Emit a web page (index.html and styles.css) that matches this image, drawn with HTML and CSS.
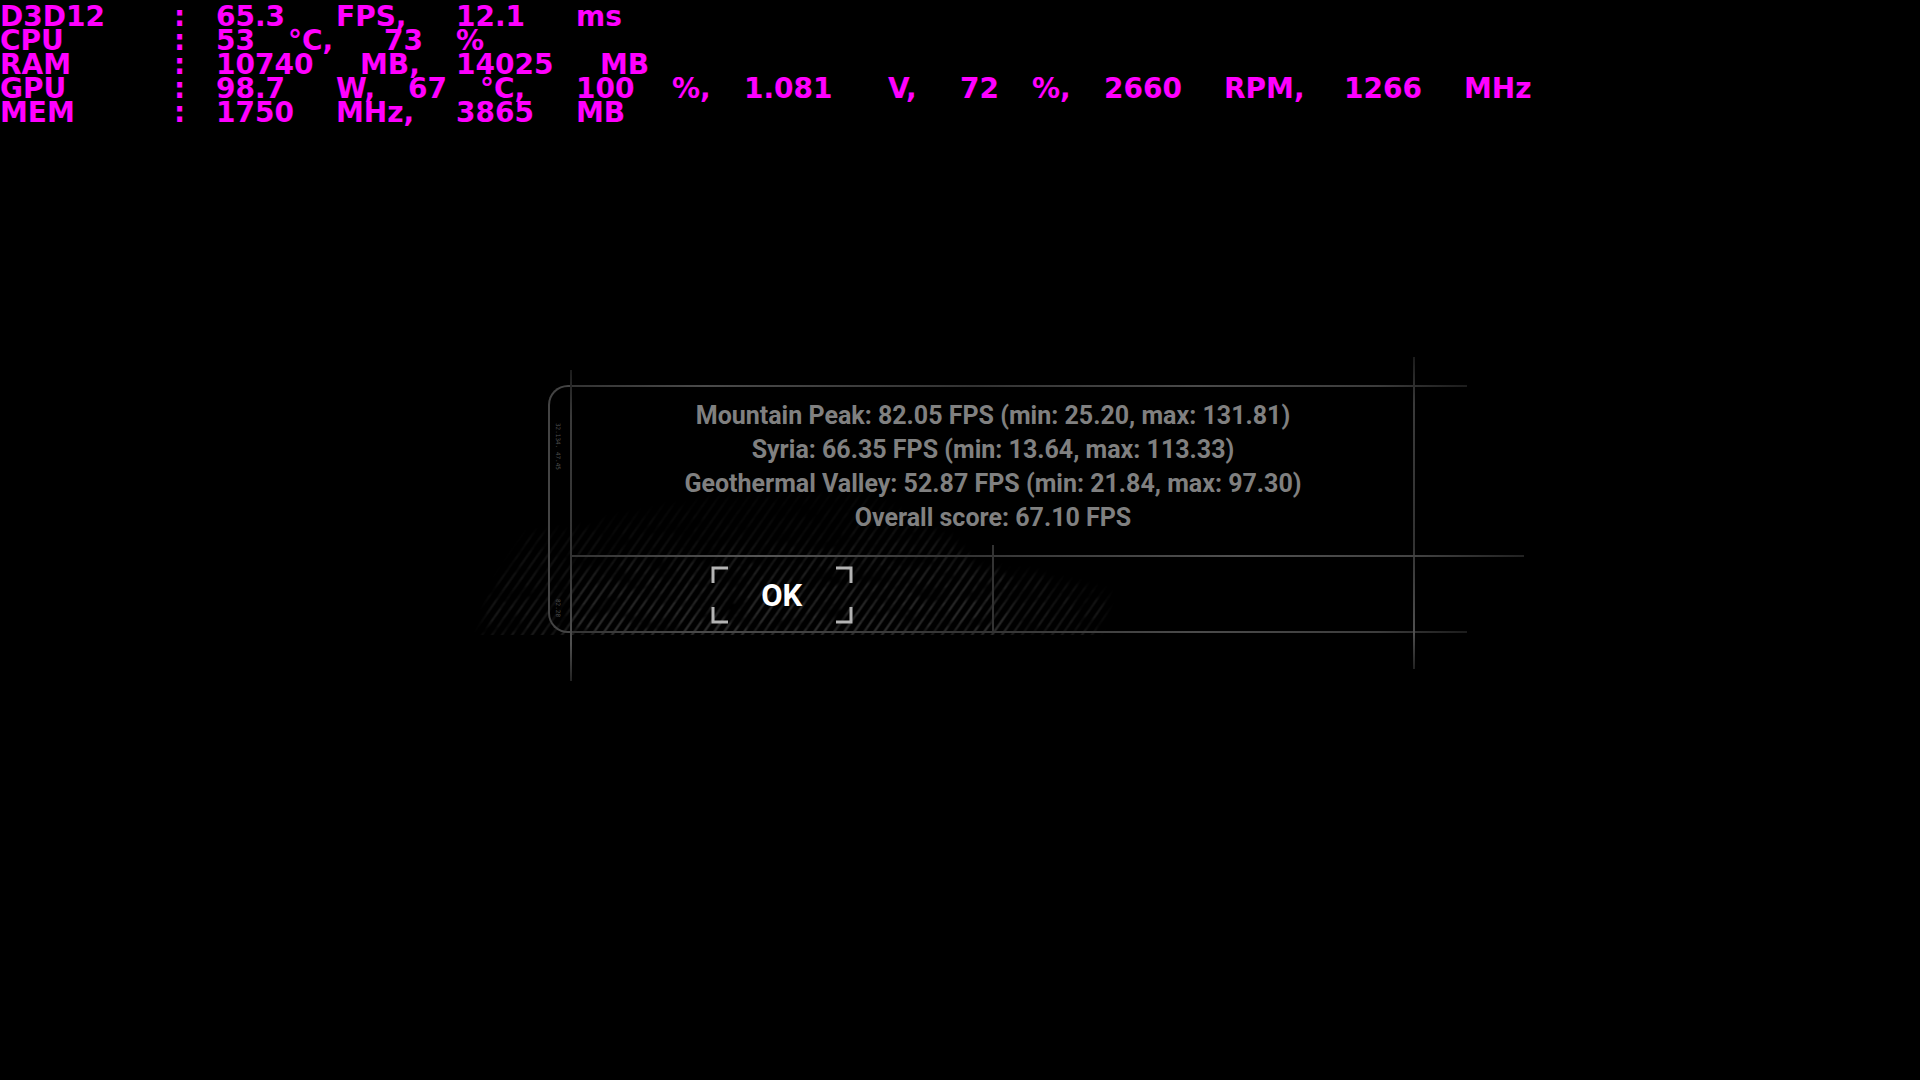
FILE: index.html
```html
<!DOCTYPE html>
<html lang="en">
<head>
<meta charset="utf-8">
<title>Benchmark results</title>
<link rel="stylesheet" href="styles.css">
</head>
<body>
<header class="hud">
  <div class="hud-row"><span class="w7">D3D12</span><span class="colon">:</span><span class="w5">65.3</span><span class="w5">FPS,</span><span class="w5">12.1</span><span>ms</span></div>
  <div class="hud-row"><span class="w7">CPU</span><span class="colon">:</span><span class="w3">53</span><span class="w4">°C,</span><span class="w3">73</span><span>%</span></div>
  <div class="hud-row"><span class="w7">RAM</span><span class="colon">:</span><span class="w6">10740</span><span class="w4">MB,</span><span class="w6">14025</span><span>MB</span></div>
  <div class="hud-row"><span class="w7">GPU</span><span class="colon">:</span><span class="w5">98.7</span><span class="w3">W,</span><span class="w3">67</span><span class="w4">°C,</span><span class="w4">100</span><span class="w3">%,</span><span class="w6">1.081</span><span class="w3">V,</span><span class="w3">72</span><span class="w3">%,</span><span class="w5">2660</span><span class="w5">RPM,</span><span class="w5">1266</span><span>MHz</span></div>
  <div class="hud-row"><span class="w7">MEM</span><span class="colon">:</span><span class="w5">1750</span><span class="w5">MHz,</span><span class="w5">3865</span><span>MB</span></div>
</header>
<main class="stage">
  <section class="dialog" role="dialog" aria-label="Benchmark results">
    <svg class="hatch" viewBox="0 0 660 156" aria-hidden="true">
      <defs>
        <pattern id="strokes" width="10" height="156" patternUnits="userSpaceOnUse" patternTransform="skewX(-35)">
          <rect x="1" width="4" height="156" fill="#fff" opacity="0.4"/>
          <rect x="2" width="2" height="156" fill="#fff" opacity="0.7"/>
        </pattern>
        <linearGradient id="fall" x1="0" y1="0" x2="0" y2="1">
          <stop offset="0" stop-color="#fff" stop-opacity="0.2"/>
          <stop offset="0.5" stop-color="#fff" stop-opacity="0.6"/>
          <stop offset="1" stop-color="#fff"/>
        </linearGradient>
        <filter id="soft" x="-10%" y="-20%" width="120%" height="140%"><feGaussianBlur stdDeviation="4"/></filter>
        <filter id="worn" x="0" y="0" width="100%" height="100%">
          <feTurbulence type="fractalNoise" baseFrequency="0.04 0.06" numOctaves="3" seed="4" result="noise"/>
          <feColorMatrix in="noise" type="matrix" values="0 0 0 0 1  0 0 0 0 1  0 0 0 0 1  2 0 0 0 -0.2" result="wear"/>
          <feComposite in="SourceGraphic" in2="wear" operator="in"/>
        </filter>
        <mask id="brush">
          <g filter="url(#soft)">
            <path d="M4 160 L16 110 L50 50 L100 42 L190 22 L260 8 L400 10 L480 56 L505 80 L560 88 L636 108 L622 160Z" fill="url(#fall)" opacity="0.4"/>
            <path d="M80 160 L90 104 L130 78 L250 62 L330 60 L400 44 L476 50 L500 84 L540 90 L530 160Z" fill="url(#fall)" opacity="0.5"/>
          </g>
        </mask>
        <clipPath id="base"><rect width="660" height="150"/></clipPath>
      </defs>
      <g clip-path="url(#base)" opacity="0.3"><g filter="url(#worn)"><rect width="660" height="156" fill="url(#strokes)" mask="url(#brush)"/></g></g>
    </svg>
    <span class="rail rail-top"></span>
    <span class="rail rail-bottom"></span>
    <span class="post post-left"></span>
    <span class="post post-right"></span>
    <div class="bracket" aria-hidden="true"><span>32.134. 47.45</span><span>82.28</span></div>
    <div class="results">
      <p>Mountain Peak: 82.05 FPS (min: 25.20, max: 131.81)</p>
      <p>Syria: 66.35 FPS (min: 13.64, max: 113.33)</p>
      <p>Geothermal Valley: 52.87 FPS (min: 21.84, max: 97.30)</p>
      <p>Overall score: 67.10 FPS</p>
    </div>
    <div class="actions">
      <div class="action">
        <button class="ok" type="button">OK
          <svg class="corners" viewBox="0 0 142 58" aria-hidden="true"><path d="M2 17V2H17M125 2H140V17M140 41V56H125M17 56H2V41"/></svg>
        </button>
      </div>
      <div class="action"></div>
    </div>
  </section>
</main>
</body>
</html>
```
FILE: styles.css
```css
* { box-sizing: border-box; }
body {
  margin: 0;
  min-height: 100vh;
  background: #000;
  color: #808080;
  font-family: Roboto, "Liberation Sans", sans-serif;
  overflow-x: hidden;
}

/* hardware monitor: words sit on a 24px character grid */
.hud {
  padding: 5px 0 1px;
  color: #f0f;
  font: bold 28px/24px "DejaVu Sans", sans-serif;
}
.hud-row { display: flex; height: 24px; white-space: nowrap; }
.hud-row span { flex: none; }
.hud-row .colon { width: 48px; padding-left: 6px; }
.w3 { width: 72px; }
.w4 { width: 96px; }
.w5 { width: 120px; }
.w6 { width: 144px; }
.w7 { width: 168px; }

.stage {
  display: flex;
  justify-content: center;
  padding: 24vh 24px 64px 88px;
}
.dialog {
  position: relative;
  width: 100%;
  max-width: 845px;
}
.results {
  min-height: 170px;
  padding: 14px 0 0 2px;
  text-align: center;
  font-size: 25px;
  font-weight: 700;
  line-height: 34px;
}
.results p { margin: 0; }
.actions {
  position: relative;
  display: grid;
  grid-template-columns: 1fr 1fr;
  height: 78px;
}
.actions::before {
  content: "";
  position: absolute;
  top: 0;
  left: 0;
  right: -109px;
  height: 2px;
  background: linear-gradient(90deg, #333, #555 20%, #333 40%, #505050 70%, #444 88%, #222);
}
.action {
  position: relative;
  display: flex;
  justify-content: center;
  align-items: center;
  padding: 2px 0 0 2px;
}
.action + .action::before {
  content: "";
  position: absolute;
  left: 0;
  top: -10px;
  bottom: 0;
  width: 2px;
  background: #333;
}
.ok {
  position: relative;
  width: 142px;
  height: 58px;
  padding: 2px 0 0;
  border: 0;
  background: none;
  color: #fff;
  font: 700 31px/56px Roboto, "Liberation Sans", sans-serif;
}
.corners {
  position: absolute;
  inset: 0;
  fill: none;
  stroke: #b4b4b4;
  stroke-width: 3;
}

/* frame */
.rail {
  position: absolute;
  left: 0;
  right: -52px;
  height: 2px;
  background: linear-gradient(90deg, #333, #4a4a4a 15%, #333 45%, #4a4a4a 70%, #3c3c3c 90%, #1c1c1c);
}
.rail-top { top: 0; }
.rail-bottom { bottom: 0; }
.post {
  position: absolute;
  width: 2px;
  background: linear-gradient(#1c1c1c, #3a3a3a 15%, #333 60%, #505050 88%, #222);
}
.post-left { left: 0; top: -15px; bottom: -48px; }
.post-right { right: 0; top: -28px; bottom: -36px; }
.bracket {
  position: absolute;
  left: -22px;
  top: 0;
  bottom: 0;
  width: 22px;
  display: flex;
  justify-content: space-between;
  align-items: flex-end;
  padding: 36px 0 14px 4px;
  border: 2px solid #444;
  border-right: 0;
  border-radius: 20px 0 0 20px;
  writing-mode: vertical-rl;
  color: #505050;
  font: 6px/8px "DejaVu Sans Mono", monospace;
}
.hatch {
  position: absolute;
  left: -96px;
  bottom: -8px;
  width: 660px;
  height: 156px;
}
```
